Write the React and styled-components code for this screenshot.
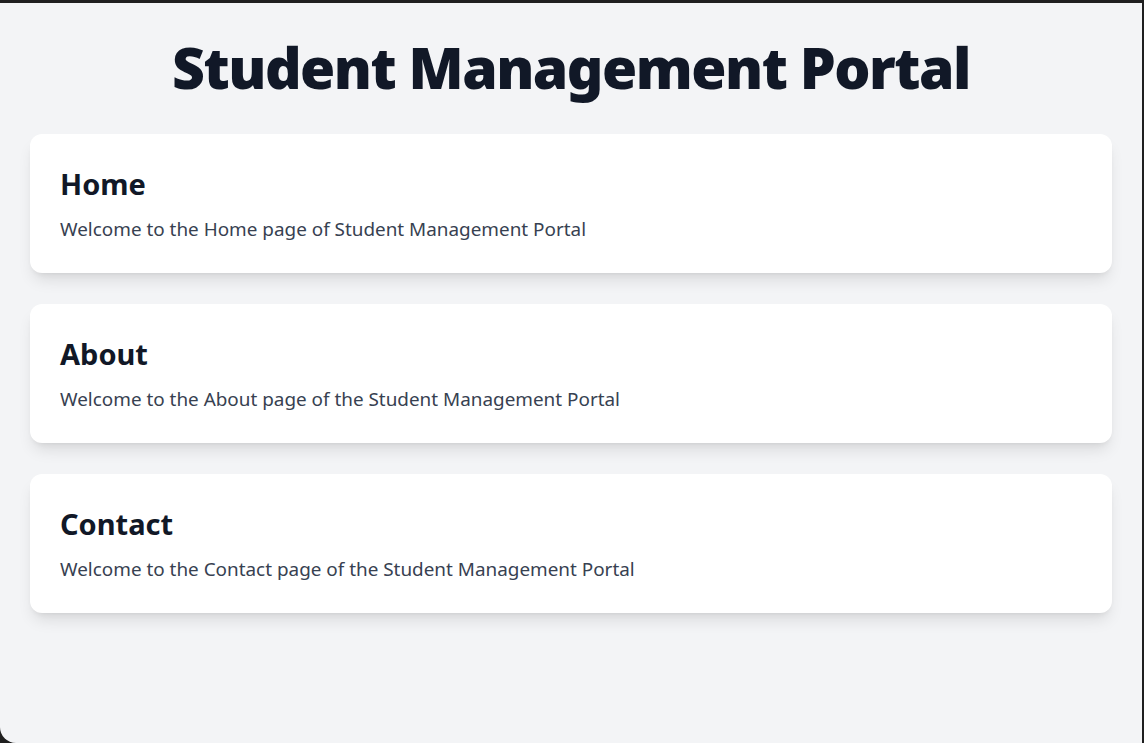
import React from 'react';
import styled, { createGlobalStyle } from 'styled-components';

const GlobalStyle = createGlobalStyle`
  html, body {
    margin: 0;
    padding: 0;
    height: 100%;
    background: #1f1f1f;
  }
  #root {
    height: 100%;
  }
  * {
    box-sizing: border-box;
  }
`;

const Frame = styled.div`
  height: 100%;
  padding: 3px 2px 0 0;
`;

const Page = styled.main`
  height: 100%;
  background: #f3f4f6;
  border-bottom-left-radius: 16px;
  padding: 34px 30px;
  font-family: 'Noto Sans', 'Open Sans', sans-serif;
`;

const Title = styled.h1`
  margin: 0 0 37px 0;
  text-align: center;
  font-size: 57px;
  line-height: 60px;
  font-weight: 900;
  color: #111827;
  letter-spacing: -1.5px;
`;

const CardList = styled.div`
  display: flex;
  flex-direction: column;
  gap: 31px;
`;

const Card = styled.section`
  background: #ffffff;
  border-radius: 12px;
  padding: 30px 30px;
  box-shadow: 0 10px 15px -3px rgba(0, 0, 0, 0.1), 0 4px 6px -4px rgba(0, 0, 0, 0.1);
`;

const CardTitle = styled.h2`
  margin: 0 0 11px 0;
  font-size: 29px;
  line-height: 40px;
  font-weight: 700;
  color: #111827;
`;

const CardText = styled.p`
  margin: 0;
  font-size: 18.9px;
  line-height: 28px;
  color: #374151;
`;

const pages = [
  { id: 'home', title: 'Home', text: 'Welcome to the Home page of Student Management Portal' },
  { id: 'about', title: 'About', text: 'Welcome to the About page of the Student Management Portal' },
  { id: 'contact', title: 'Contact', text: 'Welcome to the Contact page of the Student Management Portal' },
];

const App = () => {
  return (
    <>
      <GlobalStyle />
      <Frame>
        <Page>
          <Title>Student Management Portal</Title>
          <CardList>
            {pages.map((p) => (
              <Card key={p.id}>
                <CardTitle>{p.title}</CardTitle>
                <CardText>{p.text}</CardText>
              </Card>
            ))}
          </CardList>
        </Page>
      </Frame>
    </>
  );
};

export default App;
